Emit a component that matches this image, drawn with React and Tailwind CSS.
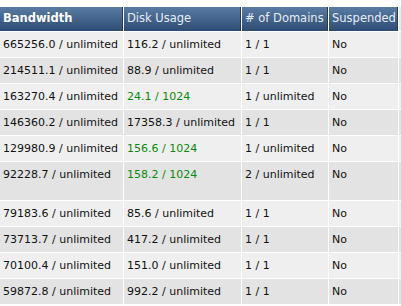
const rows = [
  { bw: "665256.0 / unlimited", disk: "116.2 / unlimited", dom: "1 / 1", susp: "No" },
  { bw: "214511.1 / unlimited", disk: "88.9 / unlimited", dom: "1 / 1", susp: "No" },
  { bw: "163270.4 / unlimited", disk: "24.1 / 1024", green: true, dom: "1 / unlimited", susp: "No" },
  { bw: "146360.2 / unlimited", disk: "17358.3 / unlimited", dom: "1 / 1", susp: "No" },
  { bw: "129980.9 / unlimited", disk: "156.6 / 1024", green: true, dom: "1 / unlimited", susp: "No" },
  { bw: "92228.7 / unlimited", disk: "158.2 / 1024", green: true, dom: "2 / unlimited", susp: "No", tall: true },
  { bw: "79183.6 / unlimited", disk: "85.6 / unlimited", dom: "1 / 1", susp: "No" },
  { bw: "73713.7 / unlimited", disk: "417.2 / unlimited", dom: "1 / 1", susp: "No" },
  { bw: "70100.4 / unlimited", disk: "151.0 / unlimited", dom: "1 / 1", susp: "No" },
  { bw: "59872.8 / unlimited", disk: "992.2 / unlimited", dom: "1 / 1", susp: "No" },
];

const headers = ["Bandwidth", "Disk Usage", "# of Domains", "Suspended"];

export default function App() {
  return (
    <div
      className="w-[401px] h-[306px] overflow-hidden bg-white pt-[7px] text-[11px] text-[#111]"
      style={{ fontFamily: '"DejaVu Sans", Verdana, sans-serif' }}
    >
      <div className="grid w-[460px] grid-cols-[123px_117px_86px_69px_60px] gap-[1px] bg-white">
        {headers.map((h, i) => (
          <div
            key={i}
            className={`flex h-[24px] items-center border-r border-[#233a58] bg-gradient-to-b from-[#5a7ca4] to-[#2d4c74] pl-[3px] whitespace-nowrap text-[11.5px] ${
              i === 0 ? "font-bold text-white" : "text-[#e8edf3]"
            }`}
          >
            {h}
          </div>
        ))}
        <div className="h-[24px] bg-[#e9e9e9]" />
        {rows.map((r, ri) => {
          const bg = ri % 2 === 0 ? "bg-[#efefef]" : "bg-[#e3e3e3]";
          const h = r.tall ? "h-[38px]" : "h-[25px]";
          const cells = [r.bw, r.disk, r.dom, r.susp, ""];
          return cells.map((c, ci) => (
            <div
              key={`${ri}-${ci}`}
              className={`${bg} ${h} pt-[6px] pl-[3px] leading-[14px] whitespace-nowrap ${
                ci === 1 && r.green ? "text-[#0a8a0a]" : ""
              }`}
            >
              {c}
            </div>
          ));
        })}
      </div>
    </div>
  );
}
